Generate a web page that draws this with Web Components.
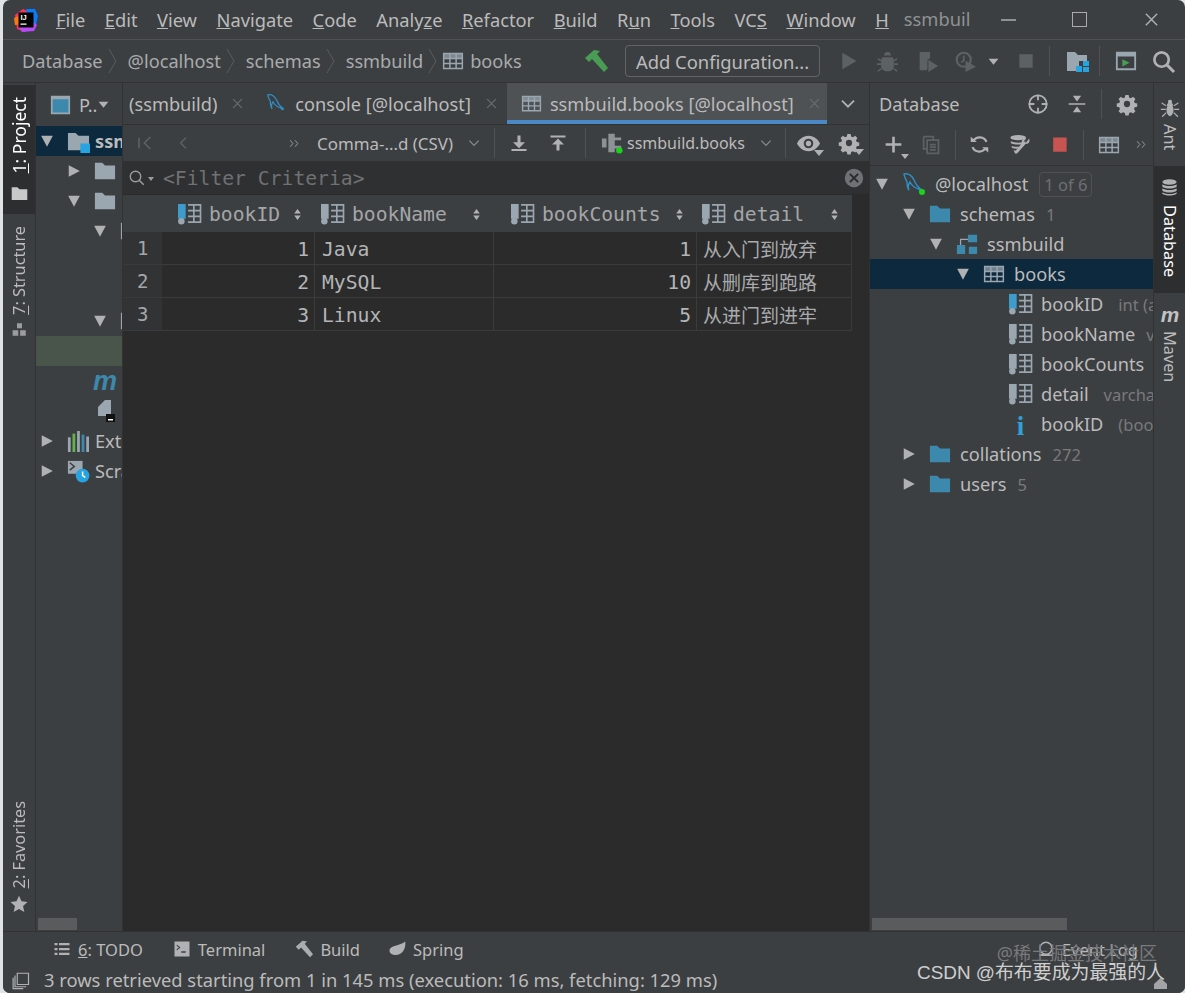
<!DOCTYPE html>
<html lang="en">
<head>
<meta charset="utf-8">
<title>ssmbuild</title>
<style>
html, body { margin: 0; height: 100%; background: #dfe3e3; overflow: hidden; }
body { font-family: "Noto Sans", "Noto Sans CJK SC", sans-serif; color: #bbbbbb; }
</style>
</head>
<body>
<ide-window></ide-window>
<script>
const GRAY = "#9aa7b0";
const DIM = "#5c6164";
const BLUE = "#3d88ad";
const grid = (c) => `<path fill="none" stroke="${c}" stroke-width="1.6" d="M1.8 3.8h20.4v16.4H1.8zM1.8 9.2h20.4M1.8 14.7h20.4M8.6 3.8v16.4M15.4 3.8v16.4"/><path fill="${c}" d="M1.8 3.8h20.4v5.4H1.8z" opacity=".7"/>`;
const column = (c) => `<path fill="${c}" d="M0 1h8v15.500H0z"/><circle cx="3.500" cy="19" r="3.400" fill="${GRAY}"/><path fill="none" stroke="${GRAY}" stroke-width="1.700" d="M10.500 2h13v18h-13M10.500 8h13M10.500 14h13M16.500 2v18"/>`;
const dolphin = `<path fill="none" stroke="#2f8fc4" stroke-width="1.4" d="M2 2c5-1 8 2 10 6 2 5 5 8 8 10-1 2-2 1-3-1-4-1-7-3-9-7-2 3-2 6-1 8-2-2-2-5-2-8C4 7 2 5 2 2z"/>`;
const gear = (c) => `<path fill="${c}" fill-rule="evenodd" d="M10 1h4l.6 3 2.2.9 2.6-1.7 2.8 2.8-1.7 2.6.9 2.2 3 .6v4l-3 .6-.9 2.2 1.7 2.6-2.8 2.8-2.6-1.7-2.2.9-.6 3h-4l-.6-3-2.2-.9-2.6 1.7-2.8-2.8 1.7-2.6-.9-2.2-3-.6v-4l3-.6.9-2.2-1.7-2.6 2.8-2.8 2.6 1.7 2.2-.9zM12 8.2a3.8 3.8 0 1 0 0 7.6 3.8 3.8 0 0 0 0-7.6z" transform="translate(1.2 1.2) scale(.9)"/>`;
const ICONS = {
  logo: `<path fill="#fe315d" d="M1 7 9 1l6 3-4 20-8-3z"/><path fill="#f97a12" d="M0 10l7-3 3 9-9 1z"/><path fill="#087cfa" d="M12 1h9l3 7-2 9-8-6z"/><path fill="#b74af7" d="M4 18l10-8 9 7-3 6-12 1z"/><path fill="#000" d="M4.500 4.500h15v15h-15z"/><text x="6.500" y="12" font-size="7.500" font-family="Liberation Sans" font-weight="700" fill="#fff">IJ</text><path fill="#fff" d="M6.500 15.500h6v1.200h-6z"/>`,
  table: grid(GRAY),
  colKey: column("#3d9ccc"),
  col: column(GRAY),
  dolphin: dolphin,
  dolphinOn: dolphin + `<circle cx="20" cy="20" r="3" fill="#19d419"/>`,
  folder: `<path fill="${GRAY}" d="M1 3h8l3 3h11v15H1z"/>`,
  folderBlue: `<path fill="${BLUE}" d="M1 3h8l3 3h11v15H1z"/>`,
  module: `<path fill="${GRAY}" d="M1 3h8l3 3h11v15H1z"/><path fill="#27a3e0" d="M14 14h10v10H14z"/>`,
  schema: `<path fill="${BLUE}" d="M1 13h9v10H1zM13 2h10v8H13zM14 15h9v8h-9z"/><path fill="none" stroke="${GRAY}" stroke-width="1.4" d="M5 13V7h8"/>`,
  index: `<text x="12" y="23" text-anchor="middle" font-family="Liberation Serif" font-weight="700" font-size="28" fill="#2ea2d6">i</text>`,
  hammer: `<path fill="#499c54" d="M1 9 10 1l6 1-3 3 11 14-4 4L8 10l-3 3z"/>`,
  hammerGray: `<path fill="#a7adb0" d="M1 9 10 1l6 1-3 3 11 14-4 4L8 10l-3 3z"/>`,
  run: `<path fill="${DIM}" d="M4 2l17 10L4 22z"/>`,
  bug: `<path fill="${DIM}" d="M8 5a4 4 0 0 1 8 0zM6 7h12c2 3 2 11 0 14-3 3-9 3-12 0-2-3-2-11 0-14zM1 8l4 2v2L1 10zM23 8l-4 2v2l4-2zM0 14h5v2H0zM24 14h-5v2h5zM1 22l4-3v2l-4 3zM23 22l-4-3v2l4 3z"/>`,
  cover: `<path fill="${DIM}" d="M3 1h12v7l-3 2v10l-1 2H3zM13 10l11 7-11 7z"/>`,
  profile: `<circle cx="10" cy="10" r="8" fill="none" stroke="${DIM}" stroke-width="2.5"/><path fill="none" stroke="${DIM}" stroke-width="2" d="M10 5v6l-3 2"/><path fill="${DIM}" d="M12 11l12 7-12 6z"/>`,
  stopDim: `<path fill="${DIM}" d="M4 4h16v16H4z"/>`,
  stopRed: `<path fill="#c75450" d="M4 3h17v18H4z"/>`,
  struct: `<path fill="${GRAY}" d="M1 3h8l3 3h9v6h-8v10H1z"/><path fill="#27a3e0" d="M17 12h6v5h-6zM10 17h6v6h-6zM17 18h6v5h-6z"/>`,
  terminalRun: `<path fill="none" stroke="${GRAY}" stroke-width="2" d="M2 3h20v18H2z"/><path fill="${GRAY}" d="M2 3h20v4H2z"/><path fill="#499c54" d="M8 10l8 4-8 4z"/>`,
  search: `<circle cx="10" cy="10" r="7.500" fill="none" stroke="#afb1b3" stroke-width="2.800"/><path stroke="#afb1b3" stroke-width="3" d="M15 15l8 8"/>`,
  target: `<circle cx="12" cy="12" r="9.500" fill="none" stroke="#afb1b3" stroke-width="2"/><path stroke="#afb1b3" stroke-width="2" d="M12 2v6M12 16v6M2 12h6M16 12h6"/>`,
  collapse: `<path fill="#afb1b3" d="M2 11h20v2H2zM12 9 7 2h10zM12 15l5 7H7z"/>`,
  gear: gear("#afb1b3"),
  plus: `<path fill="#afb1b3" d="M10.500 3h3v7.500H21v3h-7.500V21h-3v-7.500H3v-3h7.500z"/>`,
  copy: `<path fill="none" stroke="${DIM}" stroke-width="2" d="M3 3h11v3M3 3v14h3M7 7h13v15H7zM10 12h7M10 15h7M10 18h7"/>`,
  refresh: `<path fill="none" stroke="#afb1b3" stroke-width="2.600" d="M20 9a8.500 8.500 0 0 0-15-1M4 15a8.500 8.500 0 0 0 15 1"/><path fill="#afb1b3" d="M2 3l7 6H2zM22 21l-7-6h7z"/>`,
  tools: `<ellipse cx="10" cy="4" rx="8.500" ry="2.800" fill="#afb1b3"/><path fill="#afb1b3" d="M2 8c4 2 12 2 16 0v2c-4 2-12 2-16 0zM3 13c3 1 7 1 9 1l-1 2c-3 0-6 0-8-1zM5 18h4l-1 2H6zM22 5c1 3 0 6-4 6l-8 9c-1 2-4 2-4 0 0-1 7-8 8-10-1-3 2-6 5-5l-3 3 2 2z"/>`,
  download: `<path fill="#afb1b3" d="M10 2h4v9h6l-8 8-8-8h6zM2 20h20v2.500H2z"/>`,
  upload: `<path fill="#afb1b3" d="M2 2h20v2.500H2zM12 6l8 8h-6v8h-4v-8H4z"/>`,
  conn: `<path fill="#8c9296" d="M8 2h7v4h7v3h-7v6h7v3h-7v4H8zM1 7h5v10H1z"/><circle cx="20" cy="20" r="3.500" fill="#19d419"/>`,
  eye: `<path fill="#afb1b3" fill-rule="evenodd" d="M12 4c6 0 10 4 12 8-2 4-6 8-12 8S2 16 0 12c2-4 6-8 12-8zm0 3a5 5 0 1 0 0 10 5 5 0 0 0 0-10z"/><circle cx="12" cy="12" r="2.800" fill="#afb1b3"/>`,
  filter: `<circle cx="10" cy="10" r="7" fill="none" stroke="#9a9d9f" stroke-width="1.800"/><path stroke="#9a9d9f" stroke-width="2" d="M15 15l6 6"/>`,
  clear: `<circle cx="12" cy="12" r="11" fill="#6e7274"/><path stroke="#2b2b2b" stroke-width="2.400" d="M7 7l10 10M17 7 7 17"/>`,
  first: `<path fill="none" stroke="${DIM}" stroke-width="2.400" d="M3 4v16M20 3l-9 9 9 9"/>`,
  prev: `<path fill="none" stroke="${DIM}" stroke-width="2.400" d="M17 3l-9 9 9 9"/>`,
  more: `<path fill="none" stroke="#a9abad" stroke-width="1.500" d="M4 6l5 6-5 6M13 6l5 6-5 6"/>`,
  chevron: `<path fill="none" stroke="#868a8c" stroke-width="2.200" d="M4 8l8 8 8-8"/>`,
  chevronLight: `<path fill="none" stroke="#afb1b3" stroke-width="2.800" d="M3 7l9 9 9-9"/>`,
  caret: `<path fill="#afb1b3" d="M3 7h18l-9 11z"/>`,
  down: `<path fill="#afb1b3" d="M2 3h20L12 22z"/>`,
  right: `<path fill="#afb1b3" d="M3 2l19 10L3 22z"/>`,
  sort: `<path fill="#afb1b3" d="M12 2l6 8H6zM12 22l-6-8h12z"/>`,
  close: `<path stroke="#6b6e70" stroke-width="2" d="M4 4l16 16M20 4 4 20"/>`,
  project: `<path fill="#c8c8c8" d="M1 3h8l3 3h11v15H1z"/>`,
  structure: `<path fill="#9a9d9f" d="M8 2h8v8H8zM1 13h9v9H1zM13 13h9v9h-9z"/>`,
  star: `<path fill="#afb1b3" d="M12 1l3.400 7.400 8 .9-6 5.400 1.700 8L12 18.700 4.900 22.700l1.700-8-6-5.400 8-.9z"/>`,
  ant: `<path fill="#afb1b3" d="M12 2a2.500 2.500 0 0 1 2 4c2 1 2 3 1 4 2 2 2 10-3 12-5-2-5-10-3-12-1-1-1-3 1-4a2.500 2.500 0 0 1 2-4zM2 5l6 4-1 1-5-3zM22 5l-6 4 1 1 5-3zM1 13h6v1.500H1zM23 13h-6v1.500h6zM2 22l5-5 1 1-5 5zM22 22l-5-5-1 1 5 5z"/>`,
  stack: `<ellipse cx="12" cy="5" rx="9" ry="3.500" fill="#afb1b3"/><path fill="#afb1b3" d="M3 8c3 3 15 3 18 0v3c-3 3-15 3-18 0zM3 13c3 3 15 3 18 0v3c-3 3-15 3-18 0zM3 18c3 3 15 3 18 0v2c-3 3-15 3-18 0z"/>`,
  mvn: `<text x="12" y="20" text-anchor="middle" font-family="Liberation Sans" font-style="italic" font-weight="700" font-size="25" fill="#c0c2c4">m</text>`,
  mvnBlue: `<text x="12" y="20" text-anchor="middle" font-family="Liberation Sans" font-style="italic" font-weight="700" font-size="25" fill="${BLUE}">m</text>`,
  file: `<path fill="${GRAY}" d="M5 8l7-7h6v16H5z"/><path fill="#111" d="M13 15h9v8h-9z"/><path fill="#fff" d="M15 20h5v1.500h-5z"/>`,
  libs: `<path fill="${GRAY}" d="M1 8h3v16H1z"/><path fill="#62b543" d="M6 4h3v20H6z"/><path fill="${GRAY}" d="M11 1h3v23h-3zM21 7h3v17h-3z"/><path fill="${BLUE}" d="M16 5h3v19h-3z"/>`,
  scratch: `<path fill="${GRAY}" d="M1 1h16v14H1z"/><path fill="none" stroke="#3c3f41" stroke-width="1.600" d="M3 3l5 4-5 4"/><circle cx="17" cy="17" r="7.500" fill="#27a3e0"/><path stroke="#fff" stroke-width="1.600" fill="none" d="M17 12.500V17l3 2"/>`,
  list: `<path fill="#afb1b3" d="M2 4h4v3H2zM8 4h14v3H8zM2 10.500h4v3H2zM8 10.500h14v3H8zM2 17h4v3H2zM8 17h14v3H8z"/>`,
  term: `<path fill="#afb1b3" fill-rule="evenodd" d="M2 2h20v20H2zM5 6l5 4-5 4v-2l3-2-3-2zM11 15v2h6v-2z"/>`,
  leaf: `<path fill="#afb1b3" d="M23 2c1 9-3 18-13 18-4 0-8-2-8-6C2 7 16 8 23 2z"/>`,
  balloon: `<circle cx="12" cy="11" r="8" fill="none" stroke="#afb1b3" stroke-width="2"/><path stroke="#afb1b3" stroke-width="2.500" d="M3 20h18"/>`,
  panel: `<path fill="#3d88ad" d="M2 4h20v18H2z"/><path fill="none" stroke="${GRAY}" stroke-width="2" d="M2 3h20v19H2z"/><path fill="${GRAY}" d="M2 3h20v3H2z"/>`,
  pages: `<path fill="none" stroke="#afb1b3" stroke-width="1.600" d="M7 3h15v15H7zM4 6v15h15M1.500 9v14.500H15"/>`,
};

// every element below goes through this: shadow root + render()
class IdeBase extends HTMLElement {
  connectedCallback() {
    if (!this.shadowRoot) this.attachShadow({ mode: "open" });
    this.render();
  }
  render() {}
}

class IdeIcon extends IdeBase {
  render() {
    const size = this.getAttribute("size") || 20;
    const name = this.getAttribute("name");
    this.shadowRoot.innerHTML = `
    <style>
    :host { display: inline-flex; flex: none; width: ${size}px; height: ${size}px; }
    svg { width: 100%; height: 100%; display: block; overflow: visible; }
    </style>
    <svg viewBox="0 0 24 24">${ICONS[name] || ""}</svg>`;
  }
}

class IdeMenubar extends IdeBase {
  render() {
    const items = ["<u>F</u>ile", "<u>E</u>dit", "<u>V</u>iew", "<u>N</u>avigate", "<u>C</u>ode", "Analy<u>z</u>e", "<u>R</u>efactor", "<u>B</u>uild", "R<u>u</u>n", "<u>T</u>ools", "VC<u>S</u>", "<u>W</u>indow", "<u>H</u>"];
    this.shadowRoot.innerHTML = `
    <style>
    :host { display: flex; align-items: center; height: 39px; border-bottom: 1px solid #515151; padding-left: 11px; font-size: 18.3px; color: #bbbbbb; white-space: nowrap; }
    .menu { display: flex; gap: 19.500px; margin-left: 18px; }
    .title { margin-left: 15px; color: #8f9294; margin-top: -3px; }
    .win { margin-left: auto; display: flex; align-items: center; }
    .min { width: 15px; height: 2px; background: #8f9294; }
    .max { width: 13px; height: 13px; border: 1.500px solid #a8aaac; margin: 0 56px; }
    .x { margin-right: 25px; }
    </style>
    <ide-icon name="logo" size="24"></ide-icon>
    <div class="menu">${items.map((m) => `<span>${m}</span>`).join("")}</div>
    <span class="title">ssmbuil</span>
    <div class="win"><div class="min"></div><div class="max"></div><ide-icon class="x" name="close" size="17" style="filter:brightness(1.600)"></ide-icon></div>`;
  }
}

class IdeNavbar extends IdeBase {
  render() {
    const sep = `<svg class="sep" width="10" height="26" viewBox="0 0 10 26"><path fill="none" stroke="#5a5d5f" d="M1 1l7 12-7 12"/></svg>`;
    this.shadowRoot.innerHTML = `
    <style>
    :host { display: flex; align-items: center; height: 43px; padding-left: 19px; font-size: 18.2px; color: #a9abad; white-space: nowrap; border-bottom: 1px solid #323232; box-sizing: border-box; }
    .crumbs { display: flex; align-items: center; gap: 5px; }
    .sep { margin: 0 5px 0 0; }
    .tb { margin-left: auto; display: flex; align-items: center; }
    button { font: inherit; font-size: 18.4px; color: #bbbbbb; background: #3c3f41; border: 1px solid #646464; border-radius: 4px; height: 32px; width: 195px; padding: 0; margin: 0 19px 0 17px; }
    .v { width: 1px; height: 30px; background: #515151; }
    </style>
    <div class="crumbs"><span>Database</span>${sep}<span>@localhost</span>${sep}<span>schemas</span>${sep}<span>ssmbuild</span>${sep}<ide-icon name="table" size="22" style="margin-left:-6px"></ide-icon><span style="margin-left:1px">books</span></div>
    <div class="tb">
      <ide-icon name="hammer" size="24"></ide-icon>
      <button>Add Configuration...</button>
      <ide-icon name="run" size="20"></ide-icon>
      <ide-icon name="bug" size="21" style="margin-left:18px"></ide-icon>
      <ide-icon name="cover" size="21" style="margin-left:19px"></ide-icon>
      <ide-icon name="profile" size="21" style="margin-left:17px"></ide-icon>
      <ide-icon name="caret" size="13" style="margin-left:11px"></ide-icon>
      <ide-icon name="stopDim" size="20" style="margin-left:16px"></ide-icon>
      <div class="v" style="margin:0 16px 0 13px"></div>
      <ide-icon name="struct" size="24"></ide-icon>
      <div class="v" style="margin:0 15px 0 9px"></div>
      <ide-icon name="terminalRun" size="22"></ide-icon>
      <ide-icon name="search" size="23" style="margin:0 10px 0 15px"></ide-icon>
    </div>`;
  }
}

class StripeBtn extends IdeBase {
  render() {
    const side = this.getAttribute("side");
    this.shadowRoot.innerHTML = `
    <style>
    :host { display: flex; flex-direction: ${side === "left" ? "column-reverse" : "column"}; align-items: center; gap: var(--gap, 8px); font-size: 16.300px; color: #bbbbbb; padding: 12px 0; }
    :host([active]) { background: #2c2e30; color: #ffffff; }
    .t { writing-mode: vertical-rl; white-space: nowrap; line-height: 20px; ${side === "left" ? "transform: rotate(180deg);" : ""} }
    </style>
    <ide-icon name="${this.getAttribute("icon")}" size="${this.getAttribute("size") || 18}"></ide-icon>
    <span class="t"><slot></slot></span>`;
  }
}

class IdeStripe extends IdeBase {
  render() {
    const left = this.getAttribute("side") === "left";
    this.shadowRoot.innerHTML = `
    <style>
    :host { display: flex; flex-direction: column; flex: none; box-sizing: border-box; width: ${left ? 33 : 32}px; background: #3c3f41; ${left ? "border-right" : "border-left"}: 1px solid #323232; padding-top: 2px; overflow: hidden; }
    </style>
    <slot></slot>`;
  }
}

class TreeRow extends IdeBase {
  render() {
    const arrow = this.getAttribute("arrow");
    const icon = this.getAttribute("icon");
    const hint = this.getAttribute("hint");
    const indent = this.getAttribute("indent") || 0;
    const iconSize = this.getAttribute("icon-size") || 22;
    const gap = this.getAttribute("gap") || 9;
    const hintGap = this.getAttribute("hint-gap") || 11;
    this.shadowRoot.innerHTML = `
    <style>
    :host { display: flex; align-items: center; height: 30px; padding-left: ${indent}px; font-size: 18.2px; color: #bbbbbb; white-space: nowrap; overflow: hidden; box-sizing: border-box; }
    :host([selected]) { background: #0d293e; }
    :host([green]) { background: #49544a; }
    .a { width: 27px; flex: none; display: flex; }
    .l { margin-left: ${gap}px; }
    .h { margin-left: ${hintGap}px; color: #787a7c; font-size: 16.500px; }
    </style>
    <span class="a">${arrow ? `<ide-icon name="${arrow}" size="14"></ide-icon>` : ""}</span>
    ${icon ? `<ide-icon name="${icon}" size="${iconSize}"></ide-icon>` : ""}
    <span class="l"><slot></slot></span>
    ${hint ? `<span class="h">${hint}</span>` : ""}
    <slot name="extra"></slot>`;
  }
}

class ProjectPanel extends IdeBase {
  render() {
    this.shadowRoot.innerHTML = `
    <style>
    :host { display: flex; flex-direction: column; flex: none; position: relative; width: 87px; background: #3c3f41; overflow: hidden; border-right: 1px solid #323232; box-sizing: border-box; }
    .head { display: flex; align-items: center; height: 43px; flex: none; padding-left: 14px; font-size: 18.200px; color: #bbbbbb; gap: 8px; }
    .head .p { display: flex; align-items: center; }
    b { font-weight: 700; }
    .sb { position: absolute; left: 2px; bottom: 1px; width: 39px; height: 12px; background: #595b5d; }
    </style>
    <div class="head"><ide-icon name="panel" size="21"></ide-icon><span class="p">P..<ide-icon name="caret" size="13"></ide-icon></span></div>
    <tree-row selected indent="4" arrow="down" icon="module" icon-size="23" gap="5"><b>ssmbuild</b></tree-row>
    <tree-row indent="31" arrow="right" icon="folder"></tree-row>
    <tree-row indent="31" arrow="down" icon="folder"></tree-row>
    <tree-row indent="57" arrow="down" icon="folder"></tree-row>
    <tree-row></tree-row>
    <tree-row></tree-row>
    <tree-row indent="57" arrow="down" icon="folder"></tree-row>
    <tree-row green></tree-row>
    <tree-row indent="31"><ide-icon slot="extra" name="mvnBlue" size="26" style="margin-left:-11px"></ide-icon></tree-row>
    <tree-row indent="31"><ide-icon slot="extra" name="file" size="24" style="margin-left:-10px"></ide-icon></tree-row>
    <tree-row indent="4" arrow="right" icon="libs" gap="6">External Libraries</tree-row>
    <tree-row indent="4" arrow="right" icon="scratch" gap="6">Scratches and Consoles</tree-row>
    <div class="sb"></div>`;
  }
}

class EditorTab extends IdeBase {
  render() {
    const icon = this.getAttribute("icon");
    const padL = this.getAttribute("pad-l") || 12;
    const padR = this.getAttribute("pad-r") || 8;
    this.shadowRoot.innerHTML = `
    <style>
    :host { display: flex; align-items: center; box-sizing: border-box; height: 41px; padding: 0 ${padR}px 0 ${padL}px; font-size: 18.2px; color: #bbbbbb; white-space: nowrap; gap: 8px; }
    :host([active]) { background: #4e5254; box-shadow: inset 0 -4px 0 #4a88c7; }
    ide-icon.c { margin-left: 6px; }
    </style>
    ${icon ? `<ide-icon name="${icon}" size="21"></ide-icon>` : ""}
    <span><slot></slot></span>
    <ide-icon class="c" name="close" size="13"></ide-icon>`;
  }
}

class GridToolbar extends IdeBase {
  render() {
    this.shadowRoot.innerHTML = `
    <style>
    :host { display: flex; align-items: center; height: 36px; flex: none; background: #3c3f41; font-size: 16.900px; color: #bbbbbb; white-space: nowrap; padding-left: 14px; border-top: 1px solid #323232; }
    .v { width: 1px; height: 30px; background: #515151; }
    .cv { position: relative; display: flex; }
    .cv i { position: absolute; right: -4px; bottom: -1px; width: 0; height: 0; border: 5px solid transparent; border-top: 6px solid #afb1b3; border-bottom: 0; }
    </style>
    <ide-icon name="first" size="16"></ide-icon>
    <ide-icon name="prev" size="14" style="margin-left:23px"></ide-icon>
    <ide-icon name="more" size="13" style="margin-left:98px"></ide-icon>
    <span style="margin-left:16px">Comma-...d (CSV)</span>
    <ide-icon name="chevron" size="14" style="margin-left:14px"></ide-icon>
    <div class="v" style="margin:0 15px 0 13px"></div>
    <ide-icon name="download" size="18"></ide-icon>
    <ide-icon name="upload" size="18" style="margin-left:21px"></ide-icon>
    <div class="v" style="margin:0 15px 0 18px"></div>
    <ide-icon name="conn" size="22"></ide-icon>
    <span style="margin-left:4px;font-size:16px">ssmbuild.books</span>
    <ide-icon name="chevron" size="14" style="margin-left:14px"></ide-icon>
    <div class="v" style="margin:0 11px 0 12px"></div>
    <span class="cv"><ide-icon name="eye" size="23"></ide-icon><i></i></span>
    <span class="cv" style="margin-left:18px"><ide-icon name="gear" size="22"></ide-icon><i></i></span>`;
  }
}

class FilterBar extends IdeBase {
  render() {
    this.shadowRoot.innerHTML = `
    <style>
    :host { display: flex; align-items: center; height: 32px; flex: none; background: #2f3031; padding: 0 5px; font-family: "DejaVu Sans Mono", monospace; font-size: 19.700px; color: #6f7173; border-top: 1px solid #323232; }
    .c { margin-left: auto; }
    i { width: 0; height: 0; border: 3px solid transparent; border-top: 4px solid #9a9d9f; border-bottom: 0; margin: 2px 9px 0 2px; }
    </style>
    <ide-icon name="filter" size="18"></ide-icon><i></i>
    <span>&lt;Filter Criteria&gt;</span>
    <ide-icon class="c" name="clear" size="20"></ide-icon>`;
  }
}

class DataGrid extends IdeBase {
  render() {
    const cols = [["bookID", "colKey", 16], ["bookName", "col", 6], ["bookCounts", "col", 17], ["detail", "col", 5]];
    const rows = [[1, "Java", 1, "从入门到放弃"], [2, "MySQL", 10, "从删库到跑路"], [3, "Linux", 5, "从进门到进牢"]];
    this.shadowRoot.innerHTML = `
    <style>
    :host { display: grid; grid-template-columns: 39px 153px 179px 203px 155px; grid-auto-rows: 33px; grid-template-rows: 37px; margin-top: 1px; width: max-content; font-family: "DejaVu Sans Mono", monospace; font-size: 19.700px; color: #a9b7c6; white-space: nowrap; }
    .h { display: flex; align-items: center; background: #3c3f41; color: #a4a6a8; gap: 8px; padding-top: 1px; box-sizing: border-box; }
    .h.first { padding: 0; }
    .h ide-icon.s { margin-left: auto; margin-right: 11px; }
    .n { display: flex; align-items: center; background: #313335; padding-left: 14px; color: #a4a6a8; font-size: 19px; border-bottom: 1px solid #383a3b; }
    .c { display: flex; align-items: center; padding: 3px 5px 0 7px; border-right: 1px solid #3b3b3b; border-bottom: 1px solid #3b3b3b; color: #b3b5b7; box-sizing: border-box; }
    .r { justify-content: flex-end; }
    .zh { font-family: "Noto Sans CJK SC", sans-serif; font-size: 19px; color: #a8aaac; padding-top: 1px; padding-left: 6px; }
    </style>
    <div class="h first"></div>
    ${cols.map(([n, ic, pad]) => `<div class="h" style="padding-left:${pad}px"><ide-icon name="${ic}" size="23"></ide-icon><span>${n}</span><ide-icon class="s" name="sort" size="13"></ide-icon></div>`).join("")}
    ${rows.map((r, i) => `<div class="n">${i + 1}</div><div class="c r">${r[0]}</div><div class="c">${r[1]}</div><div class="c r">${r[2]}</div><div class="c zh">${r[3]}</div>`).join("")}`;
  }
}

class EditorPane extends IdeBase {
  render() {
    this.shadowRoot.innerHTML = `
    <style>
    :host { display: flex; flex-direction: column; flex: 1; min-width: 0; background: #2b2b2b; overflow: hidden; }
    .tabs { display: flex; height: 41px; flex: none; background: #3c3f41; align-items: stretch; }
    .more { flex: 1; display: flex; align-items: center; justify-content: center; }
    </style>
    <div class="tabs">
      <editor-tab pad-l="6" pad-r="11">(ssmbuild)</editor-tab>
      <editor-tab icon="dolphin" pad-l="11" pad-r="9">console [@localhost]</editor-tab>
      <editor-tab icon="table" active pad-l="14" pad-r="6">ssmbuild.books [@localhost]</editor-tab>
      <div class="more"><ide-icon name="chevronLight" size="16"></ide-icon></div>
    </div>
    <grid-toolbar></grid-toolbar>
    <filter-bar></filter-bar>
    <data-grid></data-grid>`;
  }
}

class DbPanel extends IdeBase {
  render() {
    this.shadowRoot.innerHTML = `
    <style>
    :host { display: flex; flex-direction: column; flex: none; position: relative; width: 284px; background: #3c3f41; overflow: hidden; border-left: 1px solid #323232; box-sizing: border-box; }
    .head { display: flex; align-items: center; height: 41px; flex: none; padding-left: 9px; font-size: 18.2px; color: #bbbbbb; }
    .tool { display: flex; align-items: center; height: 42px; flex: none; padding-left: 13px; border-bottom: 1px solid #323232; box-sizing: border-box; }
    .v { width: 1px; height: 30px; background: #515151; }
    .cv { position: relative; display: flex; }
    .cv i { position: absolute; right: -5px; bottom: -4px; width: 0; height: 0; border: 4px solid transparent; border-top: 5px solid #afb1b3; border-bottom: 0; }
    .badge { margin-left: 11px; border: 1px solid #515151; border-radius: 4px; padding: 0 4px; font-size: 16.500px; line-height: 23px; color: #6d7073; }
    .sb { position: absolute; left: 2px; bottom: 1px; width: 195px; height: 12px; background: #595b5d; }
    </style>
    <div class="head">
      <span>Database</span>
      <ide-icon name="target" size="22" style="margin-left:67px"></ide-icon>
      <ide-icon name="collapse" size="20" style="margin-left:18px"></ide-icon>
      <div class="v" style="margin:0 14px"></div>
      <ide-icon name="gear" size="22"></ide-icon>
    </div>
    <div class="tool">
      <span class="cv"><ide-icon name="plus" size="21"></ide-icon><i></i></span>
      <ide-icon name="copy" size="21" style="margin-left:17px"></ide-icon>
      <div class="v" style="margin:0 13px"></div>
      <ide-icon name="refresh" size="21"></ide-icon>
      <ide-icon name="tools" size="22" style="margin-left:19px"></ide-icon>
      <ide-icon name="stopRed" size="19" style="margin-left:19px"></ide-icon>
      <div class="v" style="margin:0 14px"></div>
      <ide-icon name="table" size="22"></ide-icon>
      <ide-icon name="more" size="13" style="margin-left:15px"></ide-icon>
    </div>
    <div style="height:3px"></div>
    <tree-row indent="5" arrow="down" icon="dolphinOn" icon-size="24">@localhost<span slot="extra" class="badge">1 of 6</span></tree-row>
    <tree-row indent="32" arrow="down" icon="folderBlue" hint="1">schemas</tree-row>
    <tree-row indent="59" arrow="down" icon="schema">ssmbuild</tree-row>
    <tree-row selected indent="86" arrow="down" icon="table">books</tree-row>
    <tree-row indent="112" icon="colKey" icon-size="23" hint="int (a" hint-gap="15">bookID</tree-row>
    <tree-row indent="112" icon="col" icon-size="23" hint="varchar">bookName</tree-row>
    <tree-row indent="112" icon="col" icon-size="23">bookCounts</tree-row>
    <tree-row indent="112" icon="col" icon-size="23" hint="varcha" hint-gap="15">detail</tree-row>
    <tree-row indent="112" icon="index" icon-size="23" hint="(boo" hint-gap="15">bookID</tree-row>
    <tree-row indent="32" arrow="right" icon="folderBlue" hint="272">collations</tree-row>
    <tree-row indent="32" arrow="right" icon="folderBlue" hint="5">users</tree-row>
    <div class="sb"></div>`;
  }
}

class ToolBtn extends IdeBase {
  render() {
    this.shadowRoot.innerHTML = `
    <style>
    :host { display: flex; align-items: center; gap: 7px; }
    </style>
    <ide-icon name="${this.getAttribute("icon")}" size="18"></ide-icon><span><slot></slot></span>`;
  }
}

class BottomBars extends IdeBase {
  render() {
    this.shadowRoot.innerHTML = `
    <style>
    :host { display: block; flex: none; position: relative; background: #3c3f41; color: #bbbbbb; white-space: nowrap; }
    .tools { display: flex; align-items: center; height: 35px; padding-left: 50px; gap: 30px; font-size: 16.500px; border-top: 1px solid #323232; box-sizing: border-box; }
    .tools tool-btn:last-child { margin-left: auto; margin-right: 47px; }
    .status { display: flex; align-items: center; height: 27px; padding-left: 9px; gap: 14px; font-size: 18.350px; }
    .wm { position: absolute; right: 28px; top: 8px; color: #787a7c; font-size: 18px; }
    .csdn { position: absolute; right: 20px; top: 26px; color: #cfcfcf; font-size: 18.900px; font-family: "Liberation Sans", "Noto Sans CJK SC", sans-serif; }
    .tri { position: absolute; right: 18px; bottom: 4px; width: 13px; height: 11px; background: #a2a4a6; clip-path: polygon(50% 0, 100% 55%, 100% 100%, 0 100%, 0 55%); }
    </style>
    <div class="tools">
      <tool-btn icon="list"><u>6</u>: TODO</tool-btn>
      <tool-btn icon="term">Terminal</tool-btn>
      <tool-btn icon="hammerGray">Build</tool-btn>
      <tool-btn icon="leaf" style="margin-left:-2px">Spring</tool-btn>
      <tool-btn icon="balloon">Event Log</tool-btn>
    </div>
    <div class="status"><ide-icon name="pages" size="18"></ide-icon><span>3 rows retrieved starting from 1 in 145 ms (execution: 16 ms, fetching: 129 ms)</span></div>
    <span class="wm">@稀土掘金技术社区</span>
    <span class="csdn">CSDN @布布要成为最强的人</span>
    <div class="tri"></div>`;
  }
}

class IdeWindow extends IdeBase {
  render() {
    this.shadowRoot.innerHTML = `
    <style>
    :host { display: flex; flex-direction: column; box-sizing: border-box; height: 993px; margin-left: 3px; margin-right: -3px; width: 1182px; border-radius: 7px; background: #3c3f41; overflow: hidden; }
    .main { display: flex; flex: 1; min-height: 0; }
    </style>
    <ide-menubar></ide-menubar>
    <ide-navbar></ide-navbar>
    <div class="main">
      <ide-stripe side="left">
        <stripe-btn side="left" icon="project" active size="17" style="--gap:12px;font-size:17.500px"><u>1</u>: Project</stripe-btn>
        <stripe-btn side="left" icon="structure" size="15" style="--gap:7px"><u>7</u>: Structure</stripe-btn>
        <div style="flex:1"></div>
        <stripe-btn side="left" icon="star" size="18" style="--gap:7px;margin-bottom:6px"><u>2</u>: Favorites</stripe-btn>
      </ide-stripe>
      <project-panel></project-panel>
      <editor-pane></editor-pane>
      <db-panel></db-panel>
      <ide-stripe side="right">
        <stripe-btn side="right" icon="ant" size="20" style="--gap:6px;padding:13px 0 16px">Ant</stripe-btn>
        <stripe-btn side="right" icon="stack" active size="19" style="--gap:8px;padding:12px 0 15px">Database</stripe-btn>
        <stripe-btn side="right" icon="mvn" size="20" style="--gap:6px;padding:12px 0">Maven</stripe-btn>
      </ide-stripe>
    </div>
    <bottom-bars></bottom-bars>`;
  }
}

customElements.define("ide-icon", IdeIcon);
customElements.define("ide-menubar", IdeMenubar);
customElements.define("ide-navbar", IdeNavbar);
customElements.define("stripe-btn", StripeBtn);
customElements.define("ide-stripe", IdeStripe);
customElements.define("tree-row", TreeRow);
customElements.define("project-panel", ProjectPanel);
customElements.define("editor-tab", EditorTab);
customElements.define("grid-toolbar", GridToolbar);
customElements.define("filter-bar", FilterBar);
customElements.define("data-grid", DataGrid);
customElements.define("editor-pane", EditorPane);
customElements.define("db-panel", DbPanel);
customElements.define("tool-btn", ToolBtn);
customElements.define("bottom-bars", BottomBars);
customElements.define("ide-window", IdeWindow);
</script>
</body>
</html>
